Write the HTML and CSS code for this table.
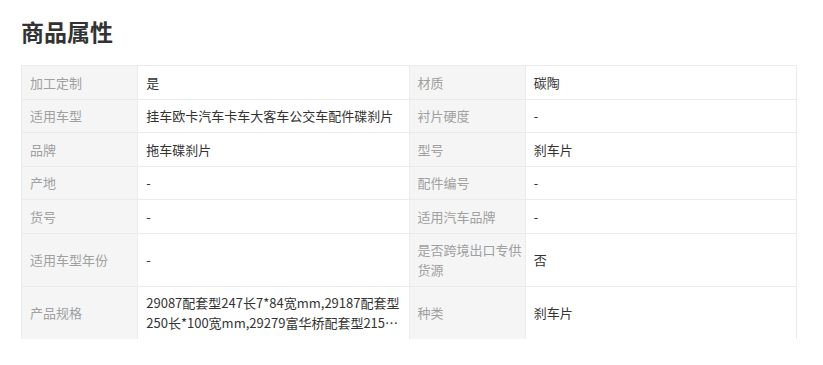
FILE: index.html
```html
<!DOCTYPE html>
<html lang="zh-CN">
<head>
<meta charset="utf-8">
<title>商品属性</title>
<link rel="stylesheet" href="styles.css">
</head>
<body>
<section class="attrs">
  <h2 class="attrs-title">商品属性</h2>
  <div class="attrs-box">
    <table class="attrs-table">
      <colgroup>
        <col class="c-label"><col class="c-value"><col class="c-label"><col class="c-value">
      </colgroup>
      <tbody>
        <tr><th>加工定制</th><td>是</td><th>材质</th><td>碳陶</td></tr>
        <tr><th>适用车型</th><td>挂车欧卡汽车卡车大客车公交车配件碟刹片</td><th>衬片硬度</th><td>-</td></tr>
        <tr><th>品牌</th><td>拖车碟刹片</td><th>型号</th><td>刹车片</td></tr>
        <tr><th>产地</th><td>-</td><th>配件编号</th><td>-</td></tr>
        <tr><th>货号</th><td>-</td><th>适用汽车品牌</th><td>-</td></tr>
        <tr><th>适用车型年份</th><td>-</td><th>是否跨境出口专供货源</th><td>否</td></tr>
        <tr><th>产品规格</th><td><div class="clamp">29087配套型247长7*84宽mm,29187配套型250长*100宽mm,29279富华桥配套型215长*90宽mm,29253配套型</div></td><th>种类</th><td>刹车片</td></tr>
      </tbody>
    </table>
  </div>
</section>
</body>
</html>
```
FILE: styles.css
```css
html, body {
  margin: 0;
  padding: 0;
  background: #fff;
}
body {
  font-family: "Noto Sans CJK SC", "Noto Sans", sans-serif;
  color: #333;
}
.attrs {
  padding: 15px 0 0 21px;
}
.attrs-title {
  margin: 0;
  font-size: 23px;
  line-height: 32px;
  font-weight: 700;
  color: #333;
}
.attrs-box {
  margin-top: 18px;
  width: 776px;
  height: 274px;
  overflow: hidden;
}
.attrs-table {
  width: 776px;
  border-collapse: collapse;
  table-layout: fixed;
  font-size: 13px;
  line-height: 19.5px;
}
.c-label { width: 15%; }
.c-value { width: 35%; }
.attrs-table th,
.attrs-table td {
  border: 1px solid #ebebeb;
  padding: 6.5px 8px;
  text-align: left;
  vertical-align: middle;
}
.attrs-table th {
  background: #f5f5f5;
  color: #a0a0a0;
  font-weight: 400;
  padding-right: 1px;
}
.attrs-table td {
  color: #333;
  background: #fff;
}
.clamp {
  display: -webkit-box;
  -webkit-line-clamp: 2;
  -webkit-box-orient: vertical;
  overflow: hidden;
}
```
